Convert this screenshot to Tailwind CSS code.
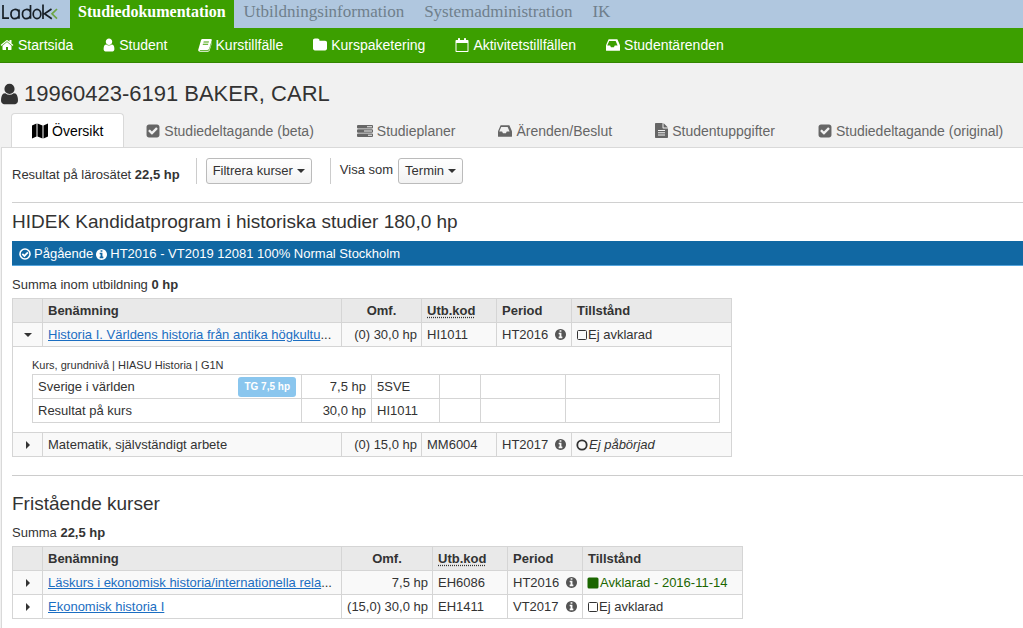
<!DOCTYPE html>
<html lang="sv">
<head>
<meta charset="utf-8">
<meta name="viewport" content="width=device-width, initial-scale=1">
<title>Ladok – Översikt</title>
<script src="https://cdn.jsdelivr.net/npm/@tailwindcss/browser@4"></script>
</head>
<body class="min-h-screen bg-[#f1f1f1] font-['Liberation_Sans',Arial,sans-serif] text-[13px] leading-5 text-[#333]">
<svg class="hidden" aria-hidden="true">
  <symbol id="home" viewBox="0 0 1792 1792"><path d="M1472 992v480q0 26-19 45t-45 19h-384v-384h-256v384h-384q-26 0-45-19t-19-45v-480q0-1 .5-3t.5-3l575-474 575 474q1 2 1 6zm223-69l-62 74q-8 9-21 11h-3q-13 0-21-7l-692-577-692 577q-12 8-24 7-13-2-21-11l-62-74q-8-10-7-23.5t11-21.5l719-599q32-26 76-26t76 26l244 204v-195q0-14 9-23t23-9h192q14 0 23 9t9 23v408l219 182q10 8 11 21.5t-7 23.5z"/></symbol>
  <symbol id="user" viewBox="192 64 1408 1664"><path d="M1536 1399q0 109-62.5 187t-150.5 78h-854q-88 0-150.5-78t-62.5-187q0-85 8.5-160.5t31.5-152 58.5-131 94-89 134.5-34.5q131 128 313 128t313-128q76 0 134.5 34.5t94 89 58.5 131 31.5 152 8.5 160.5zm-256-887q0 159-112.5 271.5t-271.5 112.5-271.5-112.5-112.5-271.5 112.5-271.5 271.5-112.5 271.5 112.5 112.5 271.5z"/></symbol>
  <symbol id="book" viewBox="0 0 14 14"><path fill-rule="evenodd" d="M4.6 1h8.1c.8 0 1.3.7 1 1.500L11.200 10.800c-.2.700-.9 1.200-1.700 1.200H2.300c-.6 0-.9.500-.2.700h7.900c.6 0 1.100-.3 1.300-.9L13.900 4c.2.300.1.700 0 1l-2.300 7.500c-.2.700-.9 1.200-1.700 1.200H2c-1.200 0-2.100-1.200-1.700-2.300L3 2.300C3.300 1.500 3.800 1 4.600 1zM5.700 3.500l-.3 1h5.300l.3-1zM5 5.700l-.3 1H10l.3-1z"/></symbol>
  <symbol id="folder" viewBox="64 64 1664 1664"><path d="M1728 608v704q0 92-66 158t-158 66h-1216q-92 0-158-66t-66-158v-960q0-92 66-158t158-66h320q92 0 158 66t66 158v32h672q92 0 158 66t66 158z"/></symbol>
  <symbol id="calendar" viewBox="0 0 14 14"><path fill-rule="evenodd" d="M1.500 2H3V.7C3 .3 3.300 0 3.700 0h.6c.4 0 .7.300.7.700V2h4V.7c0-.4.300-.7.700-.7h.6c.4 0 .7.300.7.700V2h1.500c.6 0 1 .4 1 1v10c0 .6-.4 1-1 1h-11c-.6 0-1-.4-1-1V3c0-.6.400-1 1-1zM1.500 5v8h11V5z"/></symbol>
  <symbol id="inbox" viewBox="128 128 1536 1536"><path d="M1088 960h316q-1-3-2.500-8.500t-2.500-7.500l-212-496h-708l-212 496q-1 3-2.500 8.500t-2.500 7.500h316l95 192h320zm576 30v482q0 26-19 45t-45 19h-1408q-26 0-45-19t-19-45v-482q0-62 25-123l238-552q10-25 36.500-42t52.500-17h832q26 0 52.500 17t36.500 42l238 552q25 61 25 123z"/></symbol>
  <symbol id="check" viewBox="64 64 1664 1664"><path d="M813 1299l614-614q19-19 19-45t-19-45l-102-102q-19-19-45-19t-45 19l-467 467-211-211q-19-19-45-19t-45 19l-102 102q-19 19-19 45t19 45l358 358q19 19 45 19t45-19zm851-883v960q0 119-84.500 203.500t-203.500 84.500h-960q-119 0-203.500-84.500t-84.500-203.500v-960q0-119 84.500-203.500t203.500-84.500h960q119 0 203.500 84.500t84.500 203.500z"/></symbol>
  <symbol id="map" viewBox="0 0 16 16"><path d="M0 2.500 4.500.5v13L0 15.500zM5.500.5l5 2v13l-5-2zM11.500 2.500l4.500-2v13l-4.500 2z"/></symbol>
  <symbol id="server" viewBox="0 0 16 14"><path fill-rule="evenodd" d="M1 1h14a1 1 0 0 1 1 1v1.500a1 1 0 0 1-1 1H1a1 1 0 0 1-1-1V2a1 1 0 0 1 1-1zm9 1.200v1h5v-1zM1 5.300h14a1 1 0 0 1 1 1v1.500a1 1 0 0 1-1 1H1a1 1 0 0 1-1-1V6.300a1 1 0 0 1 1-1zm6 1.200v1h8v-1zM1 9.600h14a1 1 0 0 1 1 1v1.500a1 1 0 0 1-1 1H1a1 1 0 0 1-1-1v-1.500a1 1 0 0 1 1-1zm10 1.200v1h4v-1z"/></symbol>
  <symbol id="file" viewBox="0 0 13 15"><path fill-rule="evenodd" d="M1 0h6.500v4.500c0 .6.400 1 1 1H13V14c0 .6-.4 1-1 1H1c-.6 0-1-.4-1-1V1c0-.6.400-1 1-1zm7.500.2c.3.100.5.300.7.500l3 3c.2.200.4.400.5.700H8.500zM3 7v1h7V7zm0 2.200v1h7v-1zm0 2.200v1h7v-1z"/></symbol>
  <symbol id="info" viewBox="128 128 1536 1536"><path d="M1152 1376v-160q0-14-9-23t-23-9h-96v-512q0-14-9-23t-23-9h-320q-14 0-23 9t-9 23v160q0 14 9 23t23 9h96v320h-96q-14 0-23 9t-9 23v160q0 14 9 23t23 9h448q14 0 23-9t9-23zm-128-896v-160q0-14-9-23t-23-9h-192q-14 0-23 9t-9 23v160q0 14 9 23t23 9h192q14 0 23-9t9-23zm640 416q0 209-103 385.500t-279.500 279.500-385.500 103-385.500-103-279.500-279.500-103-385.500 103-385.500 279.500-279.500 385.500-103 385.500 103 279.500 279.500 103 385.500z"/></symbol>
  <symbol id="ring" viewBox="0 0 12 12"><circle cx="6" cy="6" r="5" fill="none" stroke="currentColor" stroke-width="1.600"/><path d="M3.300 5.800 5.400 7.900 8.900 4.300" fill="none" stroke="currentColor" stroke-width="1.800"/></symbol>
  <symbol id="circle" viewBox="0 0 12 12"><circle cx="6" cy="6" r="4.700" fill="none" stroke="currentColor" stroke-width="1.800"/></symbol>
  <symbol id="box" viewBox="0 0 12 12"><rect x="1.500" y="1.500" width="9" height="9" rx="1" fill="none" stroke="currentColor"/></symbol>
  <symbol id="fullbox" viewBox="0 0 12 12"><rect x="0.500" y="0.500" width="11" height="11" rx="1.500"/></symbol>
  <symbol id="down" viewBox="0 0 8 4"><path d="M0 0h8L4 4z"/></symbol>
  <symbol id="right" viewBox="0 0 4 8"><path d="M0 0v8l4-4z"/></symbol>
</svg>

<header>
  <nav aria-label="Huvudmeny" class="flex h-7 items-stretch overflow-hidden bg-[#b0c7df] font-['Liberation_Serif','Times_New_Roman',serif] text-[17px] leading-6 whitespace-nowrap text-[#6f7f8c]">
    <a href="#" aria-label="Ladok" class="w-[70px] shrink-0">
      <svg class="h-6 w-[60px]" viewBox="0 0 60 24" fill="none" stroke="#171f26" stroke-width="1.700">
        <path d="M3 5v13.200h6M19 9.500v9.200M19 12c-1-2.500-3-2.700-4.500-2.500-5 .8-4.500 9.500.3 9.200 2-.1 3.500-1 4.200-3M30.500 5v13.700M30.500 12c-1-2.500-3-2.700-4.500-2.500-5 .8-4.500 9.500.3 9.200 2-.1 3.500-1 4.200-3M43 4.500v14.500M51.500 9l-7 4.800 7.300 5"/>
        <ellipse cx="37" cy="14" rx="3.800" ry="4.700"/>
        <path stroke="#6da544" d="M57 9l-5 4.800 5 4.800"/>
      </svg>
    </a>
    <a href="#" aria-current="page" class="bg-[#3c9f00] px-2 text-[16px] leading-6 font-bold text-white">Studiedokumentation</a>
    <a href="#" class="px-[10px]">Utbildningsinformation</a>
    <a href="#" class="px-[10px]">Systemadministration</a>
    <a href="#" class="px-[10px]">IK</a>
  </nav>
  <nav aria-label="Undermeny" class="flex h-[35px] items-center gap-[30px] overflow-hidden border-b border-[#338600] bg-[#3c9f00] text-[14px] whitespace-nowrap text-white">
    <a href="#" class="flex items-center gap-1"><svg class="size-[14px] fill-current"><use href="#home"/></svg>Startsida</a>
    <a href="#" class="flex items-center gap-1"><svg class="h-[14px] w-3 fill-current"><use href="#user"/></svg>Student</a>
    <a href="#" class="flex items-center gap-1"><svg class="size-[14px] fill-current"><use href="#book"/></svg>Kurstillfälle</a>
    <a href="#" class="flex items-center gap-1"><svg class="size-[14px] fill-current"><use href="#folder"/></svg>Kurspaketering</a>
    <a href="#" class="flex items-center gap-1"><svg class="size-[14px] fill-current"><use href="#calendar"/></svg>Aktivitetstillfällen</a>
    <a href="#" class="flex items-center gap-1"><svg class="size-[14px] fill-current"><use href="#inbox"/></svg>Studentärenden</a>
  </nav>
</header>

<h1 class="flex h-[50px] items-center gap-[5px] pt-[11px] text-[22px]"><svg class="h-[22px] w-[19px] fill-current"><use href="#user"/></svg>19960423-6191 BAKER, CARL</h1>

<nav aria-label="Flikar" class="ml-px flex gap-px overflow-hidden border-b border-[#d9d9d9] pl-[10px] text-[14px] whitespace-nowrap text-[#666]">
  <a href="#" aria-current="page" class="-mb-px flex h-[35px] items-center gap-1 rounded-t-sm border border-b-0 border-[#d9d9d9] bg-white px-5 text-black"><svg class="size-4 fill-current"><use href="#map"/></svg>Översikt</a>
  <a href="#" class="flex items-center gap-1 px-[21px] pt-px"><svg class="size-[14px] fill-current"><use href="#check"/></svg>Studiedeltagande (beta)</a>
  <a href="#" class="flex items-center gap-1 px-[21px] pt-px"><svg class="h-[14px] w-4 fill-current"><use href="#server"/></svg>Studieplaner</a>
  <a href="#" class="flex items-center gap-1 px-[21px] pt-px"><svg class="size-[14px] fill-current"><use href="#inbox"/></svg>Ärenden/Beslut</a>
  <a href="#" class="flex items-center gap-1 px-[21px] pt-px"><svg class="h-[15px] w-[13px] fill-current"><use href="#file"/></svg>Studentuppgifter</a>
  <a href="#" class="flex items-center gap-1 px-[21px] pt-px"><svg class="size-[14px] fill-current"><use href="#check"/></svg>Studiedeltagande (original)</a>
</nav>

<main class="ml-px border-l border-[#d9d9d9] bg-white pl-[10px]">
  <div class="flex h-[55px] items-start border-b border-[#d0d0d0] pt-[10px]">
    <p class="mt-[7px]">Resultat på lärosätet <strong>22,5 hp</strong></p>
    <div class="ml-4 h-[26px] border-l border-[#ccc] pl-[9px]">
      <button type="button" class="flex h-[26px] items-center gap-1 rounded-[3px] border border-[#bbb] bg-linear-to-b from-white to-[#f2f2f2] px-[6px]">Filtrera kurser<svg class="h-1 w-2 fill-current"><use href="#down"/></svg></button>
    </div>
    <div class="ml-[18px] flex h-[26px] gap-[5px] border-l border-[#ccc] pl-[9px]">
      <span id="show-as" class="pt-0.5">Visa som</span>
      <button type="button" aria-describedby="show-as" class="flex h-[26px] items-center gap-1 rounded-[3px] border border-[#bbb] bg-linear-to-b from-white to-[#f2f2f2] px-[6px]">Termin<svg class="h-1 w-2 fill-current"><use href="#down"/></svg></button>
    </div>
  </div>

  <section class="border-b border-[#ccc] pb-[18px]">
    <h2 class="pt-[7px] text-[19px] leading-6">HIDEK Kandidatprogram i historiska studier 180,0 hp</h2>
    <div class="mt-[7px] flex h-[25px] items-center gap-[3px] border-b border-[#55a5dd] bg-[#1168a3] pt-0.5 pl-[7px] text-white">
      <svg class="size-3 fill-current"><use href="#ring"/></svg><span>Pågående</span>
      <svg class="size-[11px] fill-current"><use href="#info"/></svg><span>HT2016 - VT2019 12081 100% Normal Stockholm</span>
    </div>
    <p class="mt-[9px] mb-[3px]">Summa inom utbildning <strong>0 hp</strong></p>
    <table class="w-[720px] table-fixed border-collapse border border-[#d5d5d5] [&_tr]:h-6 [&_td]:border-[#d5d5d5] [&_th]:border-[#d5d5d5]">
      <colgroup><col class="w-[30px]"><col class="w-[299px]"><col class="w-20"><col class="w-[75px]"><col class="w-[75px]"><col></colgroup>
      <thead class="bg-[#e9e9e9] text-left">
        <tr><th class="border"></th><th class="border px-[5px]">Benämning</th><th class="border px-1 text-center">Omf.</th><th class="border px-[5px]"><abbr title="Utbildningskod" class="underline decoration-dotted underline-offset-2">Utb.kod</abbr></th><th class="border px-[5px]">Period</th><th class="border px-[5px]">Tillstånd</th></tr>
      </thead>
      <tbody>
        <tr class="bg-[#f9f9f9]">
          <td class="border"><button type="button" aria-label="Dölj detaljer" aria-expanded="true" class="flex w-full justify-center"><svg class="h-1 w-2 fill-current"><use href="#down"/></svg></button></td>
          <td class="truncate border px-[5px]"><a href="#" class="text-[#1b6ec2] underline">Historia I. Världens historia från antika högkultu</a>...</td>
          <td class="border px-1 text-right whitespace-nowrap">(0) 30,0 hp</td><td class="border px-[5px]">HI1011</td>
          <td class="border px-[5px]"><div class="flex items-center justify-between">HT2016<svg class="size-[11px] fill-[#555]"><use href="#info"/></svg></div></td>
          <td class="border px-1"><div class="flex items-center"><svg class="size-3 fill-current"><use href="#box"/></svg>Ej avklarad</div></td>
        </tr>
        <tr><td colspan="6" class="border pt-[9px] pr-[11px] pb-[9px] pl-[19px]">
          <p class="text-[11px] leading-[18px]">Kurs, grundnivå | HIASU Historia | G1N</p>
          <table class="w-full table-fixed border-collapse">
            <colgroup><col class="w-[269px]"><col class="w-[70px]"><col class="w-[68px]"><col class="w-[41px]"><col class="w-[85px]"><col></colgroup>
            <tbody>
              <tr><td class="border px-[5px]"><div class="flex items-center justify-between">Sverige i världen<span class="rounded-[3px] bg-[#8ac6ee] px-[6px] text-[10px] font-bold text-white">TG 7,5 hp</span></div></td><td class="border px-[5px] text-right">7,5 hp</td><td class="border px-[5px]">5SVE</td><td class="border"></td><td class="border"></td><td class="border"></td></tr>
              <tr><td class="border px-[5px]">Resultat på kurs</td><td class="border px-[5px] text-right">30,0 hp</td><td class="border px-[5px]">HI1011</td><td class="border"></td><td class="border"></td><td class="border"></td></tr>
            </tbody>
          </table>
        </td></tr>
        <tr class="bg-[#f9f9f9]">
          <td class="border"><button type="button" aria-label="Visa detaljer" aria-expanded="false" class="flex w-full justify-center"><svg class="h-2 w-1 fill-current"><use href="#right"/></svg></button></td>
          <td class="border px-[5px]">Matematik, självständigt arbete</td>
          <td class="border px-1 text-right whitespace-nowrap">(0) 15,0 hp</td><td class="border px-[5px]">MM6004</td>
          <td class="border px-[5px]"><div class="flex items-center justify-between">HT2017<svg class="size-[11px] fill-[#555]"><use href="#info"/></svg></div></td>
          <td class="border px-1"><div class="flex items-center gap-px italic"><svg class="size-3 fill-current"><use href="#circle"/></svg>Ej påbörjad</div></td>
        </tr>
      </tbody>
    </table>
  </section>

  <section class="pb-3">
    <h2 class="pt-4 text-[19px] leading-6">Fristående kurser</h2>
    <p class="mt-[7px] mb-[3px]">Summa <strong>22,5 hp</strong></p>
    <table class="w-[731px] table-fixed border-collapse border border-[#d5d5d5] [&_tr]:h-6 [&_td]:border-[#d5d5d5] [&_th]:border-[#d5d5d5]">
      <colgroup><col class="w-[30px]"><col class="w-[299px]"><col class="w-[91px]"><col class="w-[75px]"><col class="w-[75px]"><col></colgroup>
      <thead class="bg-[#e9e9e9] text-left">
        <tr><th class="border"></th><th class="border px-[5px]">Benämning</th><th class="border px-1 text-center">Omf.</th><th class="border px-[5px]"><abbr title="Utbildningskod" class="underline decoration-dotted underline-offset-2">Utb.kod</abbr></th><th class="border px-[5px]">Period</th><th class="border px-[5px]">Tillstånd</th></tr>
      </thead>
      <tbody>
        <tr class="bg-[#f9f9f9]">
          <td class="border"><button type="button" aria-label="Visa detaljer" aria-expanded="false" class="flex w-full justify-center"><svg class="h-2 w-1 fill-current"><use href="#right"/></svg></button></td>
          <td class="truncate border px-[5px]"><a href="#" class="text-[#1b6ec2] underline">Läskurs i ekonomisk historia/internationella rela</a>...</td>
          <td class="border px-1 text-right">7,5 hp</td><td class="border px-[5px]">EH6086</td>
          <td class="border px-[5px]"><div class="flex items-center justify-between">HT2016<svg class="size-[11px] fill-[#555]"><use href="#info"/></svg></div></td>
          <td class="border px-1"><div class="flex items-center gap-px whitespace-nowrap text-[#1b6600]"><svg class="size-3 fill-current"><use href="#fullbox"/></svg>Avklarad - 2016-11-14</div></td>
        </tr>
        <tr>
          <td class="border"><button type="button" aria-label="Visa detaljer" aria-expanded="false" class="flex w-full justify-center"><svg class="h-2 w-1 fill-current"><use href="#right"/></svg></button></td>
          <td class="border px-[5px]"><a href="#" class="text-[#1b6ec2] underline">Ekonomisk historia I</a></td>
          <td class="border px-1 text-right whitespace-nowrap">(15,0) 30,0 hp</td><td class="border px-[5px]">EH1411</td>
          <td class="border px-[5px]"><div class="flex items-center justify-between">VT2017<svg class="size-[11px] fill-[#555]"><use href="#info"/></svg></div></td>
          <td class="border px-1"><div class="flex items-center"><svg class="size-3 fill-current"><use href="#box"/></svg>Ej avklarad</div></td>
        </tr>
      </tbody>
    </table>
  </section>
</main>
</body>
</html>
